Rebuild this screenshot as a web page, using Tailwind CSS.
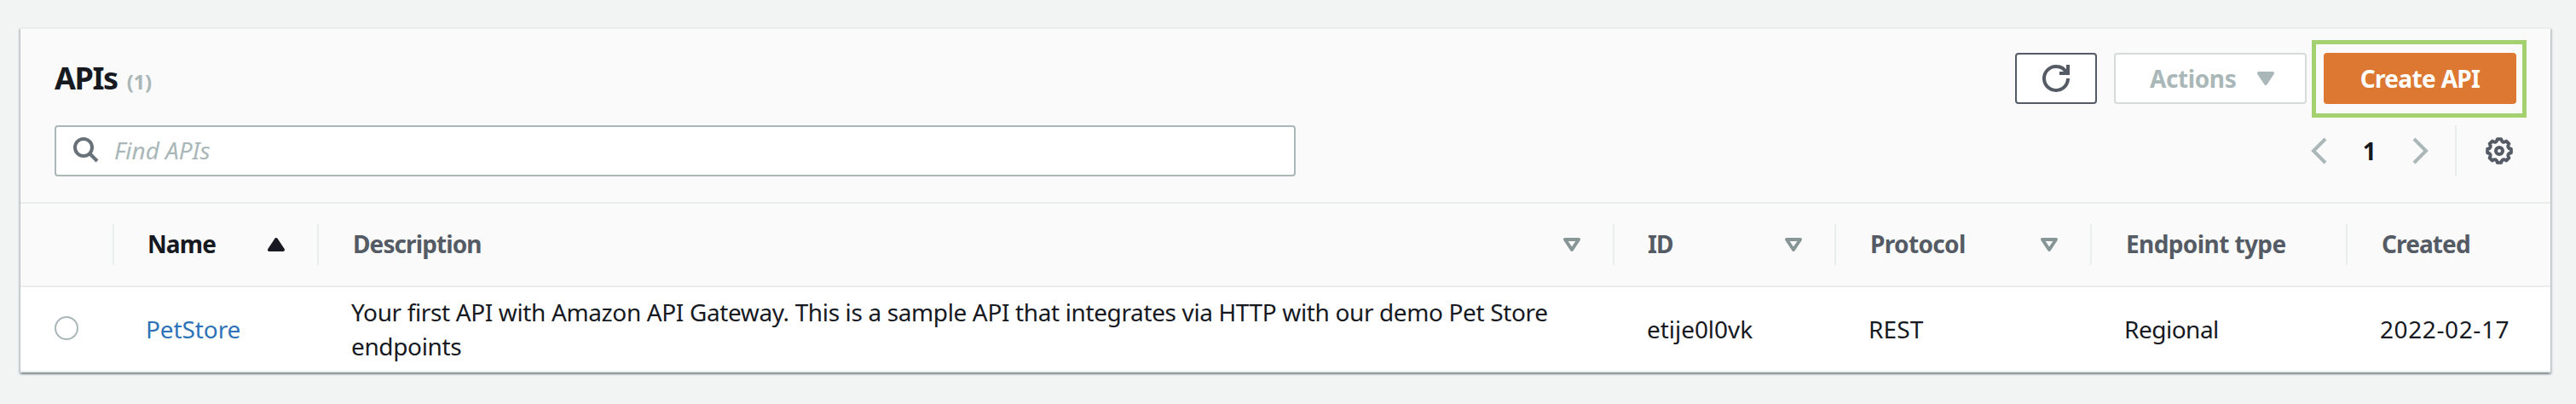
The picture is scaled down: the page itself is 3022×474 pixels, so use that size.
<!DOCTYPE html>
<html lang="en">
<head>
<meta charset="utf-8">
<title>APIs</title>
<script src="https://cdn.jsdelivr.net/npm/@tailwindcss/browser@4"></script>
</head>
<body class="h-[474px] overflow-hidden bg-[#f2f3f3] pt-8 pl-6 pr-[30px] font-['Noto_Sans','Open_Sans',sans-serif] text-[28px] leading-[40px] tracking-[-0.37px] text-[#16191f]">
<main class="h-[405px] border-t-2 border-[#eaeded] bg-white shadow-[0_2px_2px_0_rgba(0,28,36,0.3),2px_2px_2px_0_rgba(0,28,36,0.15),-2px_2px_2px_0_rgba(0,28,36,0.15)]">
  <header class="h-[205px] border-b-2 border-[#eaeded] bg-[#fafafa] pl-10 pr-7">
    <div class="flex h-[104px] items-start justify-between pt-[13px]">
      <h1 class="flex items-baseline gap-[11px] pt-[20px] text-[36px] font-bold leading-[50px] tracking-[-1.4px]">APIs <span class="text-[24px] tracking-[-0.3px] text-[#aab7b8]">(1)</span></h1>
      <div class="flex items-start">
        <button class="mt-[15px] mr-5 flex h-[60px] w-24 items-center justify-center rounded-[4px] border-2 border-[#545b64] bg-white">
          <svg class="size-8" viewBox="0 0 16 16" fill="none" stroke="#545b64" stroke-width="2"><path d="M10 5h5V0"/><path d="M15 8a6.957 6.957 0 0 1-7 7 6.957 6.957 0 0 1-7-7 6.957 6.957 0 0 1 7-7 6.87 6.87 0 0 1 6.3 4"/></svg>
        </button>
        <button class="mt-[15px] mr-1.5 flex h-[60px] w-[226px] items-center rounded-[4px] border-2 border-[#d5dbdb] bg-white pl-10 font-bold tracking-[-0.4px] text-[#aab7b8]">
          <span class="w-[120px] text-left">Actions</span>
          <svg class="size-8" viewBox="0 0 16 16" fill="#aab7b8" stroke="#aab7b8" stroke-width="2" stroke-linejoin="round"><path d="M4 5h8l-4 6-4-6z"/></svg>
        </button>
        <div class="h-[91px] w-[252px] border-[5px] border-[#a3d170] pl-[9px] pt-[10px]">
          <button class="h-[60px] w-[226px] rounded-[4px] bg-[#dd7832] font-bold tracking-[-0.65px] text-white">Create API</button>
        </div>
      </div>
    </div>
    <div class="mt-[9px] flex h-[60px] items-center justify-between">
      <div class="flex h-[60px] w-[1456px] items-center rounded-[4px] border-2 border-[#aab7b8] bg-white pl-5">
        <svg class="mr-4 size-8" viewBox="0 0 32 32" fill="none" stroke="#687078" stroke-width="4"><circle cx="12" cy="12" r="10"/><path d="m19 19 9 9"/></svg>
        <span class="pb-0.5 italic tracking-[-0.05px] text-[#aab7b8]">Find APIs</span>
      </div>
      <div class="flex h-[60px] items-center pr-4">
        <svg class="h-8 w-5" viewBox="0 0 20 32" fill="none" stroke="#aab7b8" stroke-width="4"><path d="M17 2 3 16l14 14"/></svg>
        <span class="w-[98px] pr-[1px] text-center font-bold">1</span>
        <svg class="mr-[31px] h-8 w-5" viewBox="0 0 20 32" fill="none" stroke="#aab7b8" stroke-width="4"><path d="m3 2 14 14L3 30"/></svg>
        <span class="mr-[34px] h-[60px] w-0.5 bg-[#eaeded]"></span>
        <svg class="size-8" viewBox="-16 -16 32 32" fill="none" stroke="#545b64" stroke-width="4" stroke-linejoin="round"><circle r="4"/><path d="M13.83 2.19Q8.31 3.44 11.33 8.23L8.23 11.33Q3.44 8.31 2.19 13.83H-2.19Q-3.44 8.31-8.23 11.33L-11.33 8.23Q-8.31 3.44-13.83 2.19V-2.19Q-8.31-3.44-11.33-8.23L-8.23-11.33Q-3.44-8.31-2.19-13.83H2.19Q3.44-8.31 8.23-11.33L11.33-8.23Q8.31-3.44 13.83-2.19Z"/></svg>
      </div>
    </div>
  </header>

  <div class="grid h-[98px] grid-cols-[110px_240px_1520px_260px_300px_300px_238px] items-center border-b-2 border-[#eaeded] bg-[#fafafa] font-bold tracking-[-0.9px] text-[#545b64]">
    <div class="h-12 border-r-2 border-[#eaeded]"></div>
    <div class="flex h-12 items-center justify-between border-r-2 border-[#eaeded] pl-[39px] pr-8 text-[#16191f]"><span class="pb-0.5">Name</span>
      <svg class="size-8" viewBox="0 0 16 16" fill="#16191f" stroke="#16191f" stroke-width="2" stroke-linejoin="round"><path d="M4 11h8L8 5l-4 6z"/></svg></div>
    <div class="flex h-12 items-center justify-between border-r-2 border-[#eaeded] pl-10 pr-8"><span class="pb-0.5">Description</span>
      <svg class="size-8" viewBox="0 0 16 16" fill="none" stroke="#879596" stroke-width="2" stroke-linejoin="round"><path d="M4 5h8l-4 6-4-6z"/></svg></div>
    <div class="flex h-12 items-center justify-between border-r-2 border-[#eaeded] pl-[39px] pr-8"><span class="pb-0.5">ID</span>
      <svg class="size-8" viewBox="0 0 16 16" fill="none" stroke="#879596" stroke-width="2" stroke-linejoin="round"><path d="M4 5h8l-4 6-4-6z"/></svg></div>
    <div class="flex h-12 items-center justify-between border-r-2 border-[#eaeded] pl-10 pr-8"><span class="pb-0.5 tracking-[-0.65px]">Protocol</span>
      <svg class="size-8" viewBox="0 0 16 16" fill="none" stroke="#879596" stroke-width="2" stroke-linejoin="round"><path d="M4 5h8l-4 6-4-6z"/></svg></div>
    <div class="flex h-12 items-center border-r-2 border-[#eaeded] pl-10"><span class="pb-0.5 tracking-[-0.6px]">Endpoint type</span></div>
    <div class="flex h-12 items-center pl-10"><span class="pb-0.5">Created</span></div>
  </div>

  <div class="grid h-[100px] grid-cols-[110px_240px_1520px_260px_300px_300px_238px] items-center border-b-2 border-[#eaeded] bg-white">
    <div class="pl-10"><div class="mb-0.5 size-7 rounded-full border-2 border-[#aab7b8] bg-white"></div></div>
    <a class="pl-[37px] tracking-[-0.1px] text-[#2e73b8]">PetStore</a>
    <p class="pl-[38px] pr-[38px]">Your first API with Amazon API Gateway. This is a sample API that integrates via HTTP with our demo Pet Store endpoints</p>
    <span class="pl-[38px] tracking-[-0.05px]">etije0l0vk</span>
    <span class="pl-[38px] tracking-[0.1px]">REST</span>
    <span class="pl-[38px] tracking-[-0.5px]">Regional</span>
    <span class="pl-[38px] tracking-[0.6px]">2022-02-17</span>
  </div>
</main>
</body>
</html>
